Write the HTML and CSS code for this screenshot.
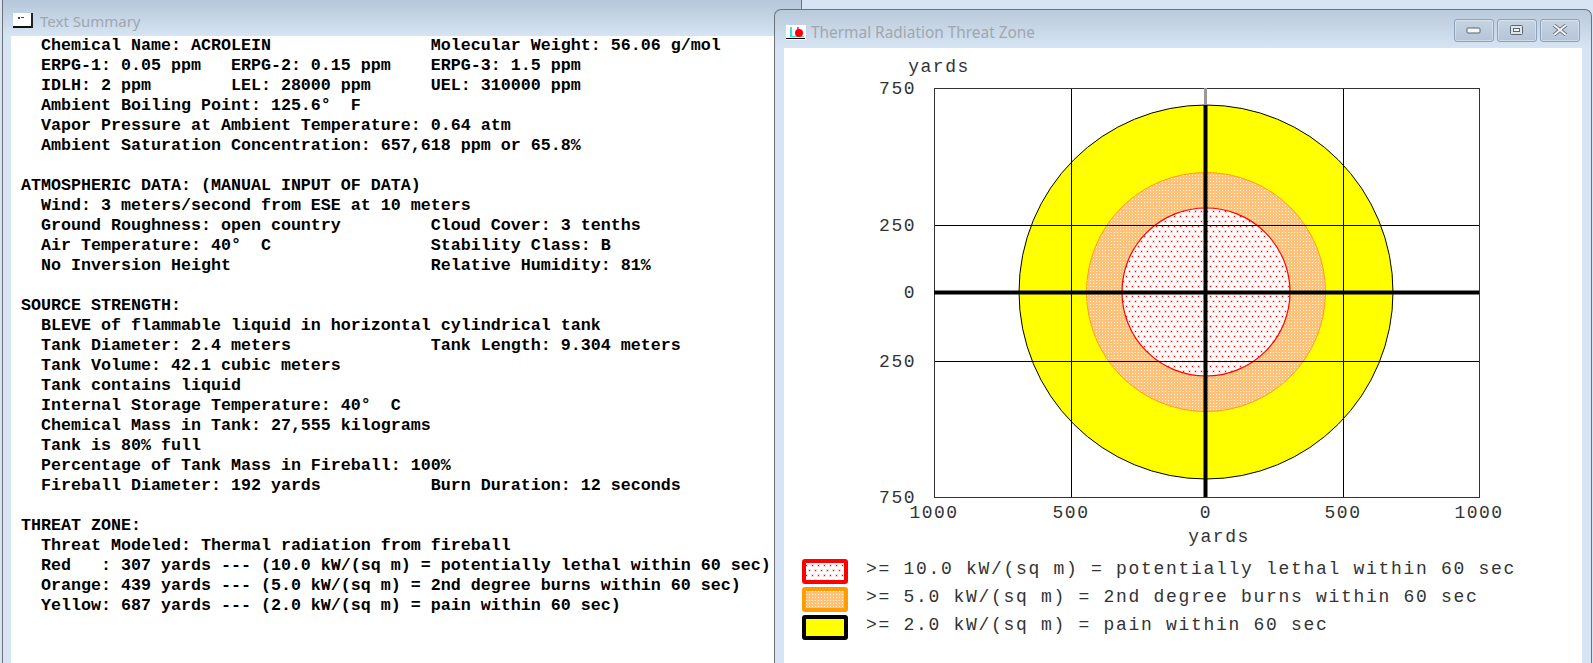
FILE: index.html
```html
<!DOCTYPE html>
<html lang="en">
<head>
    <meta charset="UTF-8">
    <title>Text Summary / Thermal Radiation Threat Zone</title>
    <link rel="stylesheet" href="styles.css">
</head>
<body>
    <!-- Text summary window -->
    <div class="window summary-window">
        <div class="titlebar">
            <svg class="title-icon" width="21" height="16" viewBox="0 0 21 16">
                <rect x="0" y="0" width="20" height="14" fill="#fff"/>
                <rect x="0" y="13" width="20" height="2" fill="#111"/>
                <rect x="18" y="0" width="2" height="15" fill="#222"/>
                <rect x="5" y="4" width="2" height="2" fill="#444"/>
                <rect x="8" y="4" width="3" height="1" fill="#444"/>
            </svg>
            <span class="title-text">Text Summary</span>
        </div>
        <pre class="client summary">  Chemical Name: ACROLEIN                Molecular Weight: 56.06 g/mol
  ERPG-1: 0.05 ppm   ERPG-2: 0.15 ppm    ERPG-3: 1.5 ppm
  IDLH: 2 ppm        LEL: 28000 ppm      UEL: 310000 ppm
  Ambient Boiling Point: 125.6°  F
  Vapor Pressure at Ambient Temperature: 0.64 atm
  Ambient Saturation Concentration: 657,618 ppm or 65.8%

ATMOSPHERIC DATA: (MANUAL INPUT OF DATA)
  Wind: 3 meters/second from ESE at 10 meters
  Ground Roughness: open country         Cloud Cover: 3 tenths
  Air Temperature: 40°  C                Stability Class: B
  No Inversion Height                    Relative Humidity: 81%

SOURCE STRENGTH:
  BLEVE of flammable liquid in horizontal cylindrical tank
  Tank Diameter: 2.4 meters              Tank Length: 9.304 meters
  Tank Volume: 42.1 cubic meters
  Tank contains liquid
  Internal Storage Temperature: 40°  C
  Chemical Mass in Tank: 27,555 kilograms
  Tank is 80% full
  Percentage of Tank Mass in Fireball: 100%
  Fireball Diameter: 192 yards           Burn Duration: 12 seconds

THREAT ZONE:
  Threat Modeled: Thermal radiation from fireball
  Red   : 307 yards --- (10.0 kW/(sq m) = potentially lethal within 60 sec)
  Orange: 439 yards --- (5.0 kW/(sq m) = 2nd degree burns within 60 sec)
  Yellow: 687 yards --- (2.0 kW/(sq m) = pain within 60 sec)</pre>
    </div>

    <!-- Threat zone window -->
    <div class="window zone-window">
        <div class="titlebar">
            <svg class="title-icon" width="20" height="15" viewBox="0 0 20 15">
                <rect width="20" height="15" fill="#fff"/>
                <rect x="4" y="2" width="2" height="10" fill="#2fe0f0"/>
                <rect x="4" y="11" width="14" height="1" fill="#2fe0f0"/>
                <rect x="11" y="2" width="2" height="10" fill="#e040e0"/>
                <circle cx="13" cy="8" r="4" fill="#f00"/>
                <rect x="0" y="13" width="19" height="1" fill="#000"/>
            </svg>
            <span class="title-text">Thermal Radiation Threat Zone</span>
            <div class="title-buttons">
                <div class="win-btn">
                    <svg width="16" height="10" viewBox="0 0 16 10"><rect x="1" y="3" width="13" height="5" rx="1" fill="#f4f6f8" stroke="#5c6470"/></svg>
                </div>
                <div class="win-btn">
                    <svg width="16" height="12" viewBox="0 0 16 12"><rect x="1.5" y="1.5" width="12" height="9" rx="1" fill="#dfe5ec" stroke="#5c6470"/><rect x="4.5" y="4.5" width="6" height="3" fill="#f4f6f8" stroke="#5c6470" stroke-width="1"/></svg>
                </div>
                <div class="win-btn">
                    <svg width="16" height="12" viewBox="0 0 16 12"><path d="M2 1 L14 11 M14 1 L2 11" stroke="#6a727c" stroke-width="3.6"/><path d="M2 1 L14 11 M14 1 L2 11" stroke="#f2f4f6" stroke-width="1.8"/></svg>
                </div>
            </div>
        </div>
        <div class="client zone">
            <svg class="chart" width="798" height="503" viewBox="784 48 798 503">
                <defs>
                    <pattern id="redDots" width="6" height="10" patternUnits="userSpaceOnUse">
                        <rect width="6" height="10" fill="#fff"/>
                        <rect x="0" y="0" width="3" height="3" fill="#ffd6d6"/>
                        <rect x="3" y="5" width="3" height="3" fill="#ffd6d6"/>
                        <rect x="1" y="1" width="1" height="1" fill="#f00"/>
                        <rect x="4" y="6" width="1" height="1" fill="#f00"/>
                    </pattern>
                    <pattern id="orangeDots" width="3" height="3" patternUnits="userSpaceOnUse">
                        <rect width="3" height="3" fill="#fdc27a"/>
                        <rect x="1" y="1" width="1" height="1" fill="#fff6e6"/>
                    </pattern>
                </defs>

                <circle cx="1206" cy="292" r="187" fill="#ff0" stroke="#000"/>
                <circle cx="1206" cy="292" r="119.5" fill="url(#orangeDots)" stroke="#ff9c1a"/>
                <circle cx="1206" cy="292" r="84" fill="url(#redDots)" stroke="#f00" stroke-width="1.2"/>

                <g class="grid">
                    <path d="M1071 88 V497 M1343 88 V497 M934 225 H1479 M934 361 H1479"/>
                </g>
                <rect class="frame" x="934.5" y="88.5" width="545" height="409"/>
                <path class="thin-axis" d="M1205.5 88 V105"/>
                <path class="axis" d="M934 292.5 H1479 M1205.5 105 V497"/>

                <text class="tick" x="916" y="94" text-anchor="end">750</text>
                <text class="tick" x="916" y="231" text-anchor="end">250</text>
                <text class="tick" x="916" y="298" text-anchor="end">0</text>
                <text class="tick" x="916" y="367" text-anchor="end">250</text>
                <text class="tick" x="916" y="503" text-anchor="end">750</text>
                <text class="tick" x="934" y="518" text-anchor="middle">1000</text>
                <text class="tick" x="1071" y="518" text-anchor="middle">500</text>
                <text class="tick" x="1206" y="518" text-anchor="middle">0</text>
                <text class="tick" x="1343" y="518" text-anchor="middle">500</text>
                <text class="tick" x="1479" y="518" text-anchor="middle">1000</text>
                <text class="tick" x="939" y="72" text-anchor="middle">yards</text>
                <text class="tick" x="1219" y="542" text-anchor="middle">yards</text>
            </svg>
            <div class="legend">
                <div class="legend-row">
                    <svg class="swatch" width="46" height="25"><rect x="2" y="2" width="42" height="21" rx="1" fill="url(#redDots)" stroke="#f00" stroke-width="4"/></svg>
                    <span>&gt;= 10.0 kW/(sq m) = potentially lethal within 60 sec</span>
                </div>
                <div class="legend-row">
                    <svg class="swatch" width="46" height="25"><rect x="2" y="2" width="42" height="21" rx="1" fill="url(#orangeDots)" stroke="#ff9c00" stroke-width="4"/></svg>
                    <span>&gt;= 5.0 kW/(sq m) = 2nd degree burns within 60 sec</span>
                </div>
                <div class="legend-row">
                    <svg class="swatch" width="46" height="25"><rect x="2" y="2" width="42" height="21" rx="1" fill="#ff0" stroke="#000" stroke-width="4"/></svg>
                    <span>&gt;= 2.0 kW/(sq m) = pain within 60 sec</span>
                </div>
            </div>
        </div>
    </div>
</body>
</html>
```

FILE: styles.css
```css
* {
    margin: 0;
    padding: 0;
    box-sizing: border-box;
}

html, body {
    width: 1593px;
    height: 663px;
    overflow: hidden;
}

body {
    position: relative;
    background-color: #d6e4f3;
    font-family: 'Noto Sans', sans-serif;
}

/* Windows sit on a desktop, so these two are placed by hand */
.window {
    position: absolute;
    display: flex;
    flex-direction: column;
    background-color: #d6e4f3;
    border: 1px solid #6d7277;
    border-bottom: none;
}

.summary-window {
    left: 2px;
    top: -8px;
    width: 800px;
    height: 671px;
    padding: 0 8px;
    border-radius: 6px 6px 0 0;
    background: linear-gradient(#b6c8da 8px, #d6e4f3 43px);
}

.zone-window {
    left: 774px;
    top: 9px;
    width: 818px;
    height: 654px;
    padding: 0 9px;
    border-radius: 7px 7px 0 0;
    background: linear-gradient(#b9cada 0, #d6e4f3 38px);
}

.titlebar {
    display: flex;
    align-items: center;
    flex-shrink: 0;
    color: #a0a6ae;
    font-size: 15px;
}

.summary-window .titlebar {
    height: 43px;
    padding: 13px 0 0 2px;
}

.zone-window .titlebar {
    height: 38px;
    padding: 7px 0 0 2px;
}

.zone-window .title-text {
    font-size: 15.4px;
    margin-left: -1px;
}

.title-icon {
    flex-shrink: 0;
    margin-right: 6px;
}

.title-buttons {
    display: flex;
    gap: 3px;
    margin-left: auto;
    margin-right: 2px;
    margin-top: -5px;
}

.win-btn {
    display: flex;
    align-items: center;
    justify-content: center;
    width: 40px;
    height: 23px;
    border: 1px solid #8ea2b8;
    border-radius: 3px;
    background: linear-gradient(#c6d4e3, #b4c5d8);
    box-shadow: inset 0 0 0 1px rgba(255, 255, 255, 0.35);
}

.client {
    flex: 1;
    background-color: #fff;
}

.summary {
    padding-left: 10px;
    font-family: 'Liberation Mono', monospace;
    font-weight: bold;
    font-size: 16.67px;
    line-height: 20px;
    color: #000;
}

.zone {
    display: flex;
    flex-direction: column;
}

.chart {
    display: block;
    flex-shrink: 0;
}

.grid path {
    fill: none;
    stroke: #000;
    stroke-width: 1;
    shape-rendering: crispEdges;
}

.frame {
    fill: none;
    stroke: #333;
    stroke-width: 1;
}

.axis {
    fill: none;
    stroke: #000;
    stroke-width: 4;
}

.thin-axis {
    fill: none;
    stroke: #999;
    stroke-width: 3;
}

.tick {
    font-family: 'Liberation Mono', monospace;
    font-size: 18px;
    letter-spacing: 1.5px;
    fill: #333;
}

.legend {
    display: flex;
    flex-direction: column;
    gap: 3px;
    padding: 8px 0 0 18px;
}

.legend-row {
    display: flex;
    align-items: center;
    gap: 18px;
    font-family: 'Liberation Mono', monospace;
    font-size: 18px;
    letter-spacing: 1.7px;
    color: #333;
    white-space: pre;
}

.legend-row span {
    margin-bottom: 5px;
}

.swatch {
    display: block;
    flex-shrink: 0;
}
```
